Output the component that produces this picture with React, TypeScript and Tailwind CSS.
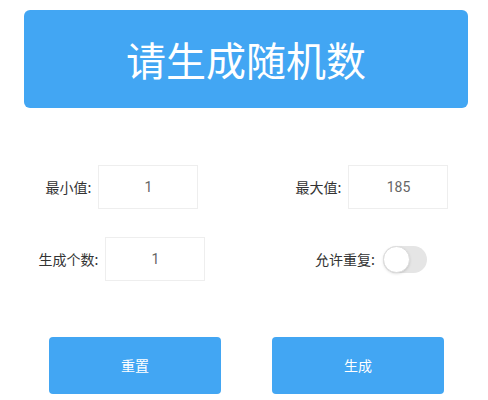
import { useState } from 'react';

const FONT = { fontFamily: '"Noto Sans CJK SC", "Noto Sans", sans-serif' };

function Field({ label, value }: { label: string; value: string }) {
  return (
    <div className="flex items-center justify-center h-[44px]">
      <span className="text-[14px] text-[#333] mr-[7px]">{label}:</span>
      <input
        defaultValue={value}
        className="w-[100px] h-[44px] border border-[#eeeeee] text-center text-[14px] text-[#666] outline-none"
        style={{ fontFamily: 'Roboto, "Noto Sans CJK SC", sans-serif' }}
      />
    </div>
  );
}

export default function App() {
  const [repeat, setRepeat] = useState(false);
  return (
    <div className="w-[488px] h-[400px] bg-white pt-[10px]" style={FONT}>
      <div className="ml-[24px] mr-[20px] h-[98px] rounded-[6px] bg-[#42a6f3] flex items-center justify-center">
        <h1 className="text-[40px] font-normal text-white leading-none">请生成随机数</h1>
      </div>
      <div className="grid grid-cols-2 mt-[57px]">
        <div className="flex flex-col gap-[28px]">
          <Field label="最小值" value="1" />
          <Field label="生成个数" value="1" />
        </div>
        <div className="flex flex-col gap-[28px] pl-[12px]">
          <Field label="最大值" value="185" />
          <div className="flex items-center justify-center h-[44px] pr-[2px]">
            <span className="text-[14px] text-[#333] mr-[8px]">允许重复:</span>
            <button
              onClick={() => setRepeat(!repeat)}
              className={'w-[44px] h-[27px] rounded-full p-0 flex items-center ' + (repeat ? 'bg-[#42a6f3] justify-end' : 'bg-[#e5e5e5] justify-start')}
            >
              <span className="w-[27px] h-[27px] rounded-full bg-white border border-[#dcdcdc] shadow-sm" />
            </button>
          </div>
        </div>
      </div>
      <div className="flex gap-[51px] mt-[56px] pl-[49px]">
        <button className="w-[172px] h-[57px] rounded-[4px] bg-[#42a6f3] text-white text-[14px]">重置</button>
        <button className="w-[172px] h-[57px] rounded-[4px] bg-[#42a6f3] text-white text-[14px]">生成</button>
      </div>
    </div>
  );
}
